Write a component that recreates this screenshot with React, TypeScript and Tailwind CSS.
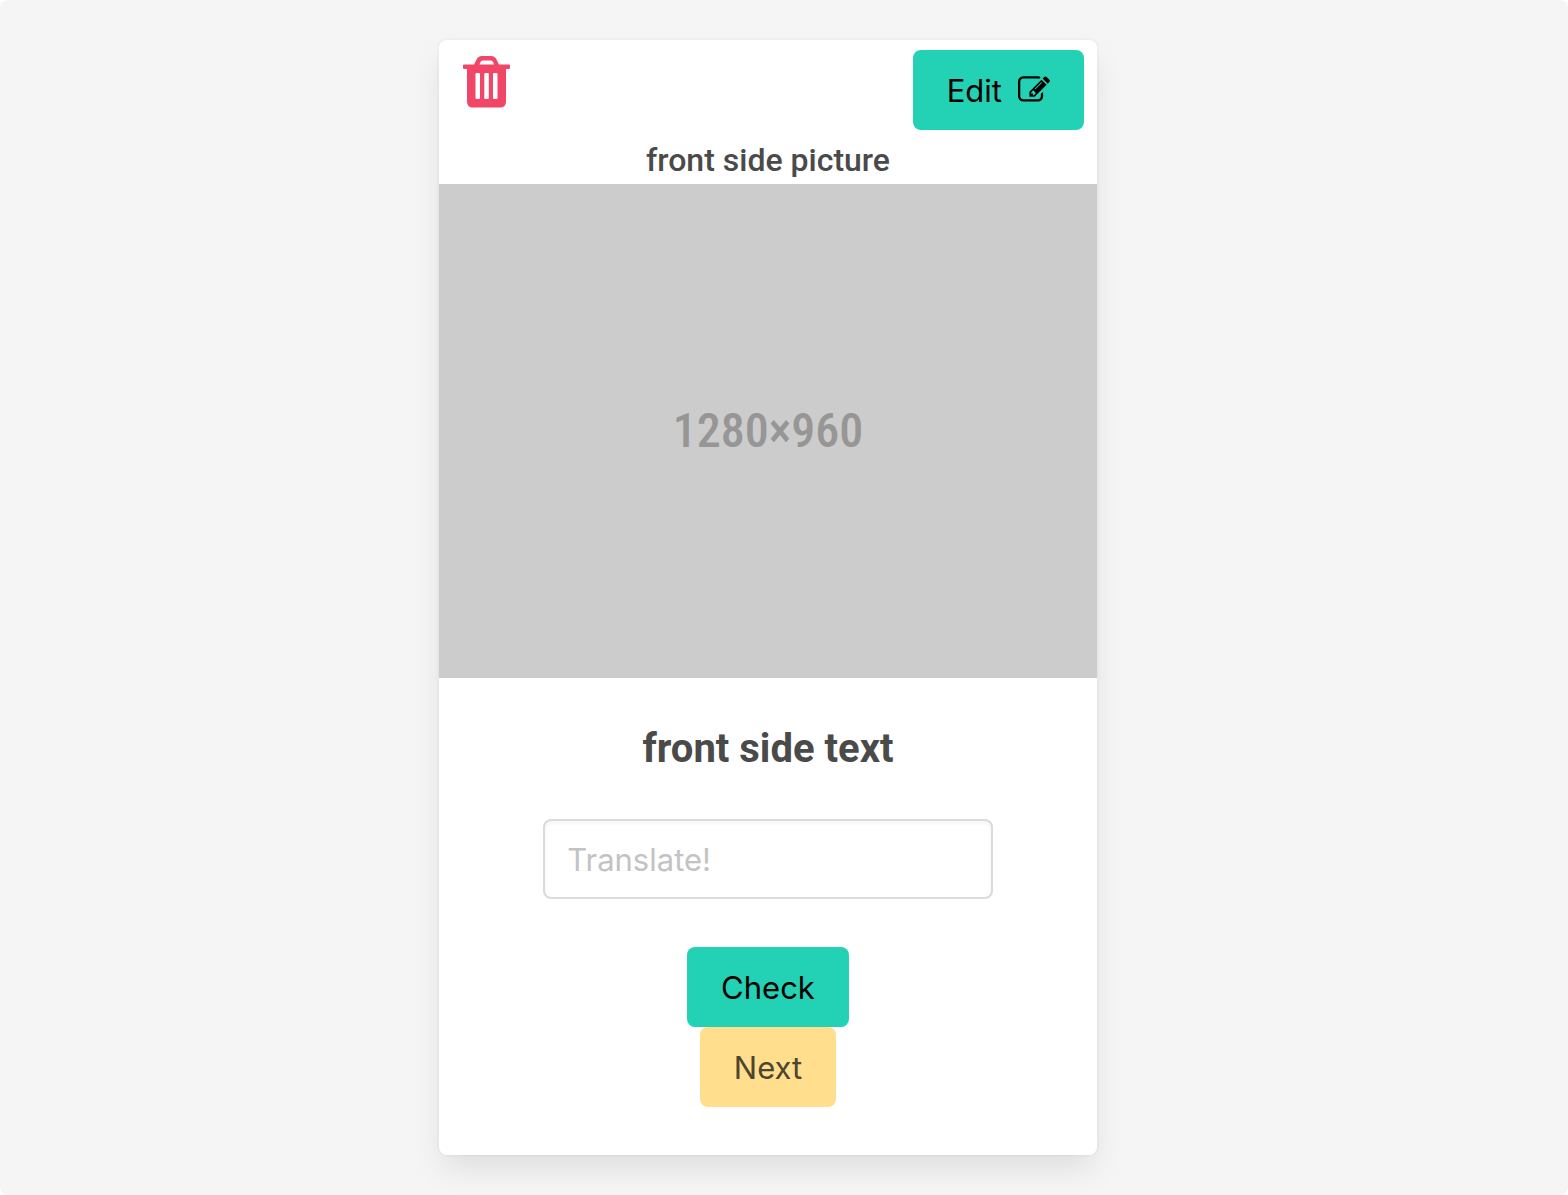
function TrashIcon() {
  return (
    <svg viewBox="0 0 48 52" className="h-[52px] w-12" fill="#f14668" aria-hidden="true">
      <path
        fillRule="evenodd"
        d="M11 8.500 L13.500 3.500 Q15 0 19 0 H28 Q32 0 33.500 3.500 L36 8.500 H46 Q47 8.500 47 9.500 V11.500 Q47 13 46 13 H43 V45.500 Q43 51.500 37 51.500 H10 Q4 51.500 4 45.500 V13 H1 Q0 13 0 11.500 V9.500 Q0 8.500 1 8.500 Z M16.500 8.500 H31 L30 6 Q29.500 4.500 28 4.500 H19.500 Q18 4.500 17.500 6 Z M13.500 17 Q12.500 17 12.500 18 V42 Q12.500 43 13.500 43 H16 Q17 43 17 42 V18 Q17 17 16 17 Z M22.300 17 Q21.300 17 21.300 18 V42 Q21.300 43 22.300 43 H24.800 Q25.800 43 25.800 42 V18 Q25.800 17 24.800 17 Z M31 17 Q30 17 30 18 V42 Q30 43 31 43 H33.500 Q34.500 43 34.500 42 V18 Q34.500 17 33.500 17 Z"
      />
    </svg>
  );
}

function EditIcon() {
  return (
    <svg viewBox="0 0 1792 1792" className="mb-0.5 size-8" fill="currentColor" aria-hidden="true">
      <path d="M888 1184l116-116-152-152-116 116v56h96v96h56zm440-720q-16-16-33 1l-350 350q-17 17-1 33t33-1l350-350q17-17 1-33zm80 594v190q0 119-84.500 203.500t-203.500 84.500h-832q-119 0-203.500-84.500t-84.500-203.500v-832q0-119 84.500-203.500t203.500-84.500h832q63 0 117 25 15 7 18 23 3 17-9 29l-49 49q-14 14-32 8-23-6-45-6h-832q-66 0-113 47t-47 113v832q0 66 47 113t113 47h832q66 0 113-47t47-113v-126q0-13 9-22l64-64q15-15 35-7t20 29zm-96-738l288 288-672 672h-288v-288zm444 132l-92 92-288-288 92-92q28-28 68-28t68 28l152 152q28 28 28 68t-28 68z" />
    </svg>
  );
}

export default function App() {
  return (
    <div className="bg-white">
      <main className="min-h-screen rounded-lg bg-[#f5f5f5] py-10 pr-[72px] pl-10 font-['Inter',sans-serif] text-[#4a4a4a]">
        <article className="mx-auto w-full max-w-[658px] overflow-hidden rounded-lg bg-white shadow-[0_16px_32px_-4px_rgba(10,10,10,0.1),0_0_0_2px_rgba(10,10,10,0.02)]">
          <header className="flex items-start justify-between pt-[10px] pr-[13px] pl-6">
            <button type="button" aria-label="Delete card" className="mt-1.5">
              <TrashIcon />
            </button>
            <button
              type="button"
              className="flex h-20 items-center gap-4 rounded-lg bg-[#23d2b4] px-[34px] pt-0.5 text-[31px] text-black"
            >
              <span>Edit</span>
              <EditIcon />
            </button>
          </header>
          <h2 className="pt-1.5 text-center font-['Roboto',sans-serif] text-[32px] leading-12 font-medium">
            front side picture
          </h2>
          <figure className="flex aspect-[658/494] items-center justify-center bg-[#ccc] font-['Roboto_Condensed','Roboto',sans-serif] text-[48px] font-medium text-[#969696]">
            1280×960
          </figure>
          <section className="flex flex-col items-center p-12">
            <h1 className="font-['Roboto',sans-serif] text-[40px] leading-[45px] font-bold">front side text</h1>
            <input
              type="text"
              aria-label="Translation"
              placeholder="Translate!"
              className="mt-12 h-20 w-4/5 rounded-lg border-2 border-[#dbdbdb] bg-white px-[22px] text-[31px] shadow-[inset_0_2px_4px_rgba(10,10,10,0.05)] outline-none placeholder:text-[#c3c3c3]"
            />
            <button type="button" className="mt-12 h-20 rounded-lg bg-[#23d2b4] px-[34px] pt-0.5 text-[31px] text-black">
              Check
            </button>
            <button type="button" className="h-20 rounded-lg bg-[#ffde8e] px-[34px] pt-0.5 text-[31px] text-[#4d452e]">
              Next
            </button>
          </section>
        </article>
      </main>
    </div>
  );
}
